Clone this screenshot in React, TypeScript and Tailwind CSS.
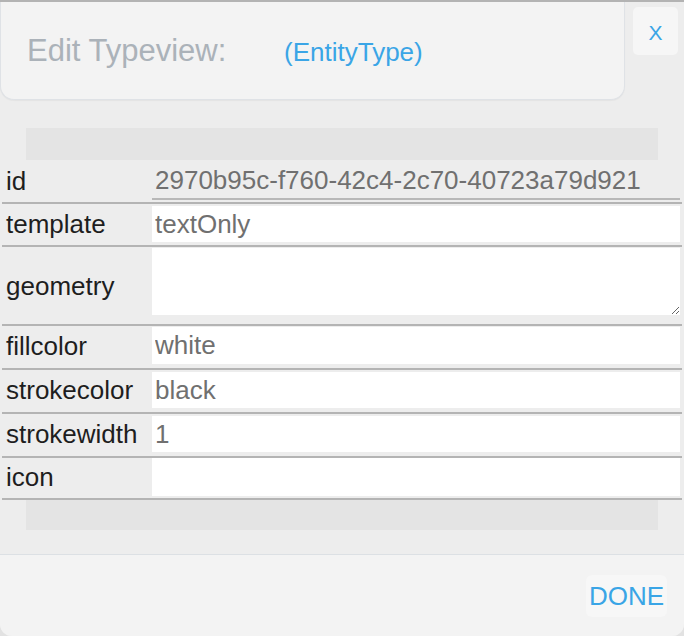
import React from "react";

const LABEL = "text-[26px] leading-none text-[#1e1e1e]";
const VALUE =
  "w-[528px] bg-white pl-[3px] text-[26px] leading-none text-[#707070] outline-none border-0";

function Row({
  label,
  value,
  pt,
  pb,
  h,
}: {
  label: string;
  value: string;
  pt: string;
  pb: string;
  h: string;
}) {
  return (
    <div className={`flex border-b-2 border-[#b4b4b4] ${pt} ${pb}`}>
      <div className={`w-[150px] pl-[4px] flex items-center ${h}`}>
        <span className={LABEL}>{label}</span>
      </div>
      <input readOnly value={value} className={`${VALUE} ${h}`} />
    </div>
  );
}

export default function App() {
  return (
    <div
      className="w-[684px] h-[636px] bg-[#e2e2e2]"
      style={{ fontFamily: '"Liberation Sans", Arial, sans-serif' }}
    >
      <div className="w-[684px] h-[636px] flex flex-col bg-[#ededed] border-t-2 border-[#b3b3b3] rounded-b-[12px] overflow-hidden">
        {/* header */}
        <div className="flex items-start">
          <div className="w-[625px] h-[98px] bg-[#f3f3f3] rounded-b-[14px] border border-t-0 border-[#dfe2e6] shadow-[0_1px_1px_rgba(0,0,0,0.04)] flex items-baseline pl-[26px] pt-[33px]">
            <span className="inline-block w-[257px] text-[31px] leading-none text-[#abb2b9]">
              Edit Typeview:
            </span>
            <span className="text-[26px] leading-none text-[#3aa5e6]">(EntityType)</span>
          </div>
          <div className="ml-[8px] mt-[5px] w-[45px] h-[48px] bg-[#f6f6f6] rounded-[5px] flex justify-center pt-[15px]">
            <span className="text-[21px] leading-none text-[#3aa5e6]">X</span>
          </div>
        </div>

        {/* top band */}
        <div className="mt-[28px] ml-[26px] w-[632px] h-[32px] bg-[#e4e4e4]" />

        {/* table */}
        <div className="px-[2px]">
          {/* id row */}
          <div className="flex border-b-2 border-[#b4b4b4] pb-[2px]">
            <div className="w-[150px] pl-[4px] h-[40px] flex items-center pt-[2px]">
              <span className={LABEL}>id</span>
            </div>
            <input
              readOnly
              value="2970b95c-f760-42c4-2c70-40723a79d921"
              className="w-[528px] h-[40px] bg-transparent pl-[3px] pt-[2px] text-[26px] leading-none text-[#707070] outline-none border-0 border-b-2 border-[#b8b8b8]"
            />
          </div>
          <Row label="template" value="textOnly" pt="pt-[2px]" pb="pb-[3px]" h="h-[36px]" />
          {/* geometry */}
          <div className="flex border-b-2 border-[#b4b4b4] pt-[1px] pb-[9px]">
            <div className="w-[150px] pl-[4px] h-[67px] flex items-center pt-[9px]">
              <span className={LABEL}>geometry</span>
            </div>
            <textarea
              readOnly
              className="w-[528px] h-[67px] bg-white pl-[3px] text-[26px] leading-none text-[#707070] outline-none border-0 resize block"
            />
          </div>
          <Row label="fillcolor" value="white" pt="pt-[1px]" pb="pb-[4px]" h="h-[37px]" />
          <Row label="strokecolor" value="black" pt="pt-[2px]" pb="pb-[4px]" h="h-[36px]" />
          <Row label="strokewidth" value="1" pt="pt-[2px]" pb="pb-[4px]" h="h-[36px]" />
          <Row label="icon" value="" pt="pt-0" pb="pb-[2px]" h="h-[38px]" />
        </div>

        {/* bottom band */}
        <div className="ml-[26px] w-[632px] h-[30px] bg-[#e4e4e4]" />

        {/* footer */}
        <div className="mt-[24px] flex-1 border-t border-[#dce0e4] bg-[#f3f3f3] flex justify-end items-start pt-[20px] pr-[17px]">
          <div className="w-[81px] h-[42px] bg-[#f7f7f7] rounded-[6px] flex items-center justify-center">
            <span className="text-[26px] leading-none text-[#3aa5e6]">DONE</span>
          </div>
        </div>
      </div>
    </div>
  );
}
